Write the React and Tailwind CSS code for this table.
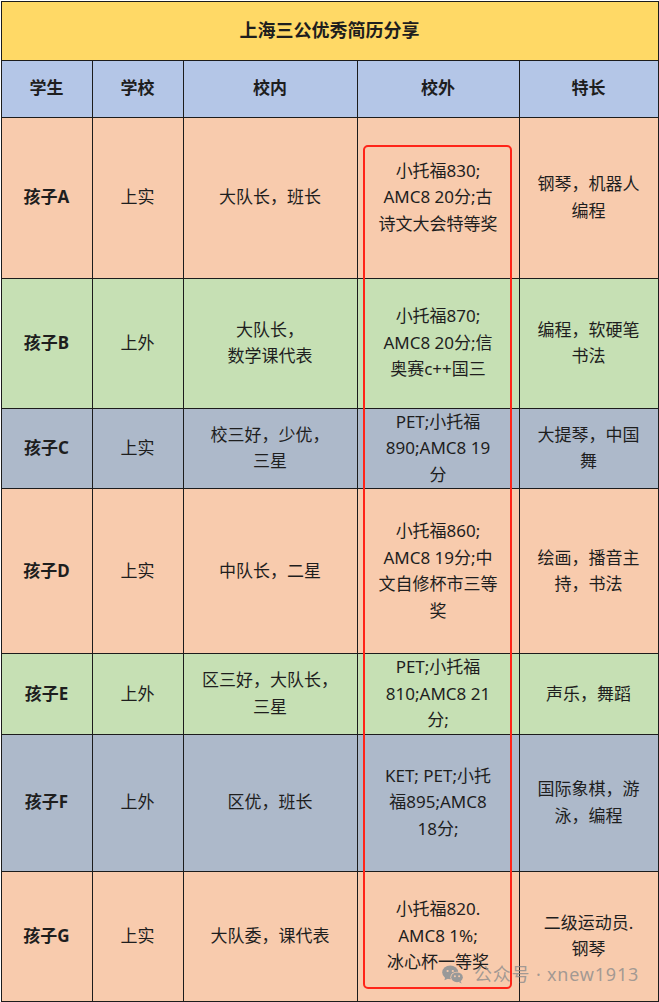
import React from "react";

const rows = [
  { name: "孩子A", school: "上实", inside: ["大队长，班长"], outside: ["小托福830;", "AMC8 20分;古", "诗文大会特等奖"], skill: ["钢琴，机器人", "编程"], bg: "bg-[#f8cbad]", h: "h-[161px]" },
  { name: "孩子B", school: "上外", inside: ["大队长，", "数学课代表"], outside: ["小托福870;", "AMC8 20分;信", "奥赛c++国三"], skill: ["编程，软硬笔", "书法"], bg: "bg-[#c6e0b4]", h: "h-[130px]" },
  { name: "孩子C", school: "上实", inside: ["校三好，少优，", "三星"], outside: ["PET;小托福", "890;AMC8 19", "分"], skill: ["大提琴，中国", "舞"], bg: "bg-[#adb9ca]", h: "h-[80px]" },
  { name: "孩子D", school: "上实", inside: ["中队长，二星"], outside: ["小托福860;", "AMC8 19分;中", "文自修杯市三等", "奖"], skill: ["绘画，播音主", "持，书法"], bg: "bg-[#f8cbad]", h: "h-[165px]" },
  { name: "孩子E", school: "上外", inside: ["区三好，大队长，", "三星"], outside: ["PET;小托福", "810;AMC8 21", "分;"], skill: ["声乐，舞蹈"], bg: "bg-[#c6e0b4]", h: "h-[80px]" },
  { name: "孩子F", school: "上外", inside: ["区优，班长"], outside: ["KET; PET;小托", "福895;AMC8", "18分;"], skill: ["国际象棋，游", "泳，编程"], bg: "bg-[#adb9ca]", h: "h-[137px]" },
  { name: "孩子G", school: "上实", inside: ["大队委，课代表"], outside: ["小托福820.", "AMC8 1%;", "冰心杯一等奖"], skill: ["二级运动员.", "钢琴"], bg: "bg-[#f8cbad]", h: "h-[130px]" },
];

function Lines({ items }) {
  return items.map((t, i) => (
    <span key={i} className="block whitespace-nowrap">
      {t}
    </span>
  ));
}

function WeChat() {
  return (
    <svg width="22" height="19" viewBox="0 0 22 19" className="shrink-0">
      <ellipse cx="8.2" cy="7.4" rx="8" ry="6.8" fill="#999" />
      <path d="M3.2 12.2 L2.4 15.2 L6.4 13.4 Z" fill="#999" />
      <circle cx="5.6" cy="6" r="1.1" fill="#f8cbad" />
      <circle cx="10.8" cy="6" r="1.1" fill="#f8cbad" />
      <ellipse cx="15" cy="12.3" rx="6.6" ry="5.6" fill="#f8cbad" />
      <ellipse cx="15" cy="12.3" rx="5.8" ry="4.9" fill="#999" />
      <path d="M18.6 16 L19.6 18.6 L16.4 16.8 Z" fill="#999" />
      <circle cx="12.9" cy="11.3" r="0.95" fill="#f8cbad" />
      <circle cx="17.1" cy="11.3" r="0.95" fill="#f8cbad" />
    </svg>
  );
}

export default function App() {
  const td = "border-[1.5px] border-[#1c1c1c] text-center align-middle px-1";
  return (
    <div
      className="relative w-[659px] h-[1002px] overflow-hidden bg-white text-[#1e1e1e] text-[17px] leading-[26.5px]"
      style={{ fontFamily: '"Noto Sans", "Noto Sans CJK SC", sans-serif' }}
    >
      <table className="table-fixed border-collapse w-[657px] ml-[0.5px] mt-[0.5px]">
        <colgroup>
          <col className="w-[91px]" />
          <col className="w-[91px]" />
          <col className="w-[174px]" />
          <col className="w-[162px]" />
          <col className="w-[139px]" />
        </colgroup>
        <tbody>
          <tr className="h-[59px] bg-[#ffd966]">
            <td colSpan={5} className={`${td} font-bold text-[18px]`}>
              上海三公优秀简历分享
            </td>
          </tr>
          <tr className="h-[57px] bg-[#b4c6e7] font-bold">
            <td className={td}>学生</td>
            <td className={td}>学校</td>
            <td className={td}>校内</td>
            <td className={td}>校外</td>
            <td className={td}>特长</td>
          </tr>
          {rows.map((r) => (
            <tr key={r.name} className={`${r.bg} ${r.h}`}>
              <td className={`${td} font-bold`}>{r.name}</td>
              <td className={td}>{r.school}</td>
              <td className={td}>
                <Lines items={r.inside} />
              </td>
              <td className={td}>
                <Lines items={r.outside} />
              </td>
              <td className={td}>
                <Lines items={r.skill} />
              </td>
            </tr>
          ))}
        </tbody>
      </table>

      <div className="absolute left-[363px] top-[145px] w-[149px] h-[844px] border-2 border-[#ff2418] rounded-[5px] pointer-events-none" />

      <div className="absolute left-[442px] top-[962px] flex items-center gap-[10px] text-[18px] leading-[24px] tracking-[0.8px] text-[#8c8c8c]/80">
        <WeChat />
        <span>公众号 · xnew1913</span>
      </div>
    </div>
  );
}
